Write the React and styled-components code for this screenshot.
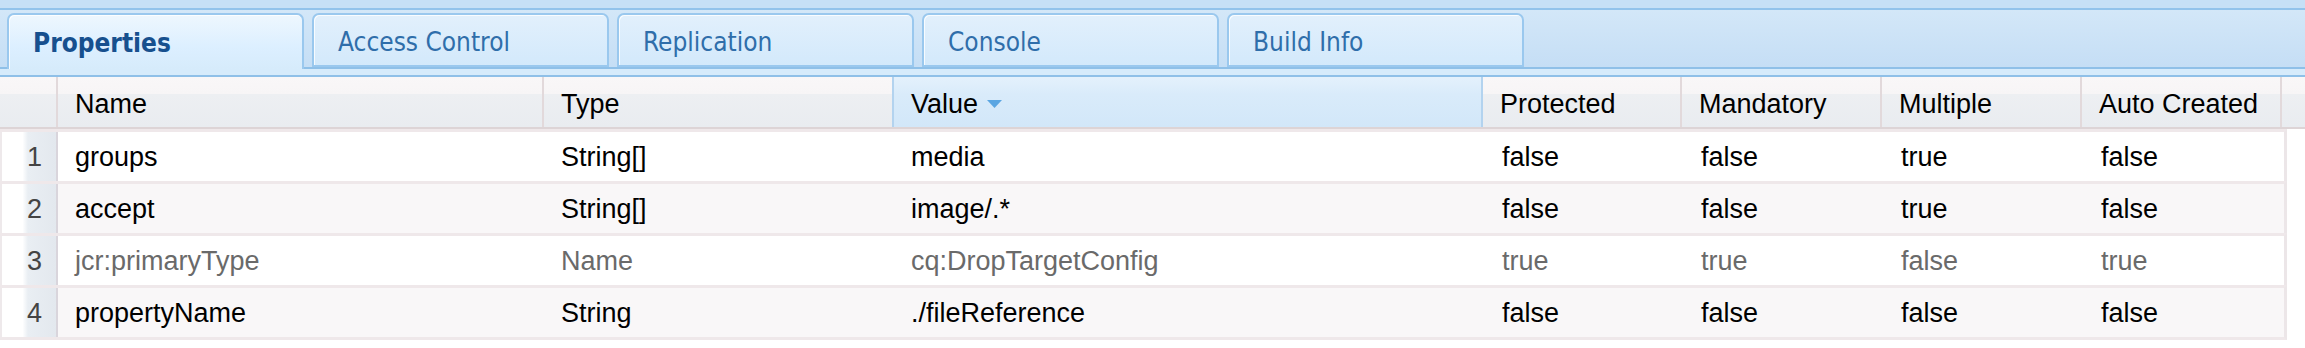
import styled, { createGlobalStyle } from 'styled-components';

const tabs = ['Properties', 'Access Control', 'Replication', 'Console', 'Build Info'];

const columns = [
  { key: 'name', label: 'Name', width: 486 },
  { key: 'type', label: 'Type', width: 350 },
  { key: 'value', label: 'Value', width: 591, sorted: true },
  { key: 'prot', label: 'Protected', width: 199 },
  { key: 'mand', label: 'Mandatory', width: 200 },
  { key: 'mult', label: 'Multiple', width: 200 },
  { key: 'auto', label: 'Auto Created', width: 200 },
];

const rows = [
  { name: 'groups', type: 'String[]', value: 'media', prot: 'false', mand: 'false', mult: 'true', auto: 'false' },
  { name: 'accept', type: 'String[]', value: 'image/.*', prot: 'false', mand: 'false', mult: 'true', auto: 'false' },
  { name: 'jcr:primaryType', type: 'Name', value: 'cq:DropTargetConfig', prot: 'true', mand: 'true', mult: 'false', auto: 'true', muted: true },
  { name: 'propertyName', type: 'String', value: './fileReference', prot: 'false', mand: 'false', mult: 'false', auto: 'false' },
];

const GlobalStyle = createGlobalStyle`
  html, body {
    margin: 0;
    padding: 0;
    background: #fff;
    overflow: hidden;
  }
`;

const Page = styled.div`
  width: 2305px;
  height: 348px;
  display: flex;
  flex-direction: column;
  font-family: 'Liberation Sans', Arial, sans-serif;
`;

const TabBar = styled.div`
  display: flex;
  flex-direction: column;
`;

const TabTop = styled.div`
  height: 8px;
  background: #c6e0f6;
  border-bottom: 2px solid #92c3eb;
`;

const TabRow = styled.div`
  height: 57px;
  box-sizing: border-box;
  display: flex;
  align-items: flex-end;
  gap: 8px;
  padding-left: 7px;
  background: linear-gradient(#d3e7f8, #c5def5);
`;

const Tab = styled.div`
  width: 297px;
  height: ${({ $active }) => ($active ? '56px' : '54px')};
  margin-bottom: ${({ $active }) => ($active ? '-2px' : '0')};
  position: relative;
  z-index: ${({ $active }) => ($active ? 1 : 0)};
  box-sizing: border-box;
  display: flex;
  align-items: center;
  padding-left: 24px;
  padding-top: ${({ $active }) => ($active ? '2px' : '4px')};
  border: 2px solid #9ac8ee;
  border-bottom: ${({ $active }) => ($active ? 'none' : '2px solid #9ac8ee')};
  border-radius: 7px 7px 0 0;
  box-shadow: inset 1px 1px 0 rgba(255, 255, 255, 0.8);
  background: ${({ $active }) =>
    $active
      ? 'linear-gradient(#eef7fe, #dcefff 60%, #d6ebfb)'
      : 'linear-gradient(#e2f0fc, #d3e9fb)'};
  font-family: 'DejaVu Sans', Verdana, sans-serif;
  font-stretch: condensed;
  font-size: 26px;
  font-weight: ${({ $active }) => ($active ? 700 : 400)};
  color: ${({ $active }) => ($active ? '#17508e' : '#2f6eaa')};
  white-space: nowrap;
`;

const TabFoot = styled.div`
  height: 6px;
  background: #d6ebfb;
  border-top: 2px solid #8fc0e8;
  border-bottom: 2px solid #8fc0e8;
`;

const HeaderRow = styled.div`
  display: flex;
  height: 52px;
  box-sizing: border-box;
  border-bottom: 2px solid #ddd4d6;
  background: linear-gradient(#f9f7f8 0%, #f7f5f6 34%, #edeff2 35%, #e9ecf0 100%);
`;

const HeadCell = styled.div`
  width: ${({ $w }) => $w}px;
  flex: none;
  box-sizing: border-box;
  display: flex;
  align-items: center;
  gap: 9px;
  padding: 4px 0 0 17px;
  border-right: 2px solid ${({ $sorted }) => ($sorted ? '#b3d3ef' : '#e2d9db')};
  font-size: 27px;
  color: #000;
  white-space: nowrap;
  ${({ $sorted }) =>
    $sorted &&
    `
    background: linear-gradient(#e4f1fc, #d9ebfa 35%, #d2e7f9 100%);
    border-left: 2px solid #b3d3ef;
    margin-left: -2px;
  `}
`;

const Filler = styled.div`
  flex: 1;
`;

const Body = styled.div`
  width: 2287px;
  display: flex;
  flex-direction: column;
`;

const Row = styled.div`
  display: flex;
  height: 52px;
  box-sizing: border-box;
  border-top: 3px solid #efe8ea;
  border-right: 3px solid #ece6e8;
  background: ${({ $alt }) => ($alt ? '#f9f7f8' : '#fff')};
  &:last-child {
    height: 55px;
    border-bottom: 3px solid #efe8ea;
  }
`;

const NumCell = styled.div`
  width: 58px;
  flex: none;
  box-sizing: border-box;
  display: flex;
  align-items: center;
  justify-content: flex-end;
  padding: 2px 14px 0 0;
  border-left: 2px solid #eee9eb;
  border-right: 2px solid #d9d5dc;
  background: linear-gradient(to right, #fff 0%, #fff 38%, #e9eef3 48%, #e3e8ee 100%);
  font-size: 27px;
  color: #444;
`;

const Cell = styled.div`
  width: ${({ $w }) => $w}px;
  flex: none;
  box-sizing: border-box;
  display: flex;
  align-items: center;
  padding: 2px 0 0 17px;
  font-size: 27px;
  color: ${({ $muted }) => ($muted ? '#6a6a6a' : '#000')};
  white-space: nowrap;
`;

const SortArrow = () => (
  <svg width="15" height="9" viewBox="0 0 15 9">
    <polygon points="0,0 15,0 7.5,8" fill="#5ba6e2" />
  </svg>
);

const App = () => {
  return (
    <>
      <GlobalStyle />
      <Page>
        <TabBar>
          <TabTop />
          <TabRow>
            {tabs.map((t, i) => (
              <Tab key={t} $active={i === 0}>
                {t}
              </Tab>
            ))}
          </TabRow>
          <TabFoot />
        </TabBar>

        <HeaderRow>
          <HeadCell $w={58} />
          {columns.map((c) => (
            <HeadCell key={c.key} $w={c.width} $sorted={c.sorted}>
              {c.label}
              {c.sorted && <SortArrow />}
            </HeadCell>
          ))}
          <Filler />
        </HeaderRow>

        <Body>
          {rows.map((r, i) => (
            <Row key={r.name} $alt={i % 2 === 1}>
              <NumCell>{i + 1}</NumCell>
              {columns.map((c) => (
                <Cell key={c.key} $w={c.width} $muted={r.muted}>
                  {r[c.key]}
                </Cell>
              ))}
            </Row>
          ))}
        </Body>
      </Page>
    </>
  );
};

export default App;
